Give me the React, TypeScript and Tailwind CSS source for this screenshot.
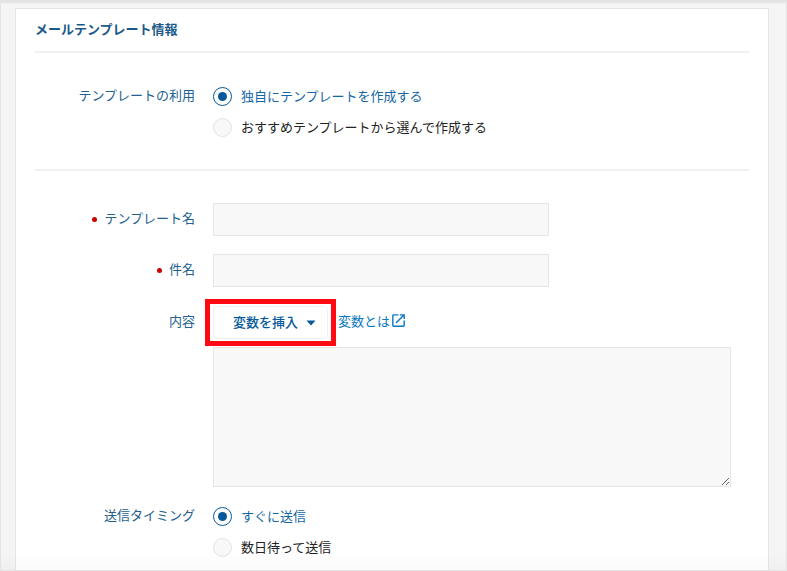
import { useState } from 'react';
import type { ReactNode } from 'react';

type RowProps = {
  label: string;
  htmlFor?: string;
  required?: boolean;
  children: ReactNode;
};

function Row({ label, htmlFor, required, children }: RowProps) {
  return (
    <div className="flex gap-[18px]">
      <label
        htmlFor={htmlFor}
        className="flex w-40 shrink-0 items-start justify-end leading-[30px] text-[#24618f]"
      >
        {required && (
          <span className="mt-[14px] mr-[7px] h-[5px] w-[5px] shrink-0 rounded-full bg-[#c80000]" />
        )}
        {label}
      </label>
      <div className="min-w-0 flex-1">{children}</div>
    </div>
  );
}

type RadioGroupProps = {
  name: string;
  label: string;
  options: string[];
};

function RadioGroup({ name, label, options }: RadioGroupProps) {
  const [value, setValue] = useState(options[0]);

  return (
    <fieldset className="flex gap-[18px]" aria-label={label}>
      <div className="w-40 shrink-0 text-right leading-4 text-[#24618f]">{label}</div>
      <div className="flex min-w-0 flex-1 flex-col items-start gap-3">
        {options.map((option) => (
          <label key={option} className="flex cursor-pointer items-start gap-[9px] leading-[17px]">
            <input
              type="radio"
              name={name}
              checked={value === option}
              onChange={() => setValue(option)}
              className="flex h-[19px] w-[19px] shrink-0 appearance-none items-center justify-center rounded-full border border-[#e4e4e4] bg-[#f8f8f8] before:h-[9px] before:w-[9px] before:rounded-full checked:border-[#06599a] checked:bg-white checked:before:bg-[#06599a]"
            />
            <span className={value === option ? 'text-[#1566a4]' : 'text-[#222]'}>{option}</span>
          </label>
        ))}
      </div>
    </fieldset>
  );
}

const fieldClass = 'block border border-[#e6e6e6] bg-[#f8f8f8] px-2 outline-none focus:border-[#06599a]';

export default function App() {
  return (
    <div className="relative flex min-h-screen flex-col border border-[#e4e4e4] bg-[#f5f5f5] pr-[17px] pl-[14px] font-['Noto_Sans_CJK_JP',sans-serif] text-[13px]">
      <div className="-mr-[17px] -ml-[14px] h-[3px] bg-linear-to-b from-[#dedede] to-[#f2f2f2]" />

      <main className="mt-1 flex-1 border border-b-0 border-[#e6e6e6] bg-white px-[19px] pb-3">
        <h1 className="border-b-2 border-[#f0f0f0] pt-[10px] pb-3 leading-5 font-bold text-[#1a5a8a]">
          メールテンプレート情報
        </h1>

        <section className="border-b-2 border-[#f0f0f0] pt-[34px] pb-8">
          <RadioGroup
            name="usage"
            label="テンプレートの利用"
            options={['独自にテンプレートを作成する', 'おすすめテンプレートから選んで作成する']}
          />
        </section>

        <section className="pt-8">
          <div className="flex flex-col gap-[19px]">
            <div className="flex flex-col gap-[18px]">
              <Row label="テンプレート名" htmlFor="template-name" required>
                <input id="template-name" type="text" className={`${fieldClass} h-[33px] w-full max-w-[336px]`} />
              </Row>
              <Row label="件名" htmlFor="subject" required>
                <input id="subject" type="text" className={`${fieldClass} h-[33px] w-full max-w-[336px]`} />
              </Row>
            </div>
            <Row label="内容" htmlFor="body">
              <div className="flex items-center gap-[10px]">
                <div className="relative">
                  <button
                    type="button"
                    className="flex h-[33px] items-center gap-2 rounded border border-[#edf1f5] bg-white pr-[11px] pb-0.5 pl-[19px] font-medium text-[#06599a]"
                  >
                    変数を挿入
                    <svg width="10" height="6" viewBox="0 0 10 6" fill="currentColor" aria-hidden="true" className="mt-0.5">
                      <path d="M1.100.5h7.800q.7 0 .2.6L5.500 5.100q-.5.4-1 0L.900 1.100Q.4.5 1.100.5z" />
                    </svg>
                  </button>
                  {/* highlight frame */}
                  <div className="pointer-events-none absolute -inset-x-2 -inset-y-[7px] border-5 border-[#ff0a12]" />
                </div>
                <a href="#variables" className="flex items-center pb-1 text-[#0a78c2]">
                  変数とは
                  <svg width="17" height="17" viewBox="0 0 24 24" fill="currentColor" aria-hidden="true">
                    <path d="M19 19H5V5h7V3H5a2 2 0 0 0-2 2v14a2 2 0 0 0 2 2h14c1.1 0 2-.9 2-2v-7h-2v7zM14 3v2h3.590l-9.830 9.830 1.410 1.410L19 6.410V10h2V3h-7z" />
                  </svg>
                </a>
              </div>
              <div className="mt-2 pr-[18px]">
                <textarea id="body" className={`${fieldClass} h-[140px] w-full resize-y py-2`} />
              </div>
            </Row>
          </div>

          <div className="mt-5">
            <RadioGroup name="timing" label="送信タイミング" options={['すぐに送信', '数日待って送信']} />
          </div>
        </section>
      </main>

      <div className="pointer-events-none absolute inset-x-0 bottom-0 h-5 bg-linear-to-b from-transparent to-black/2" />
    </div>
  );
}
